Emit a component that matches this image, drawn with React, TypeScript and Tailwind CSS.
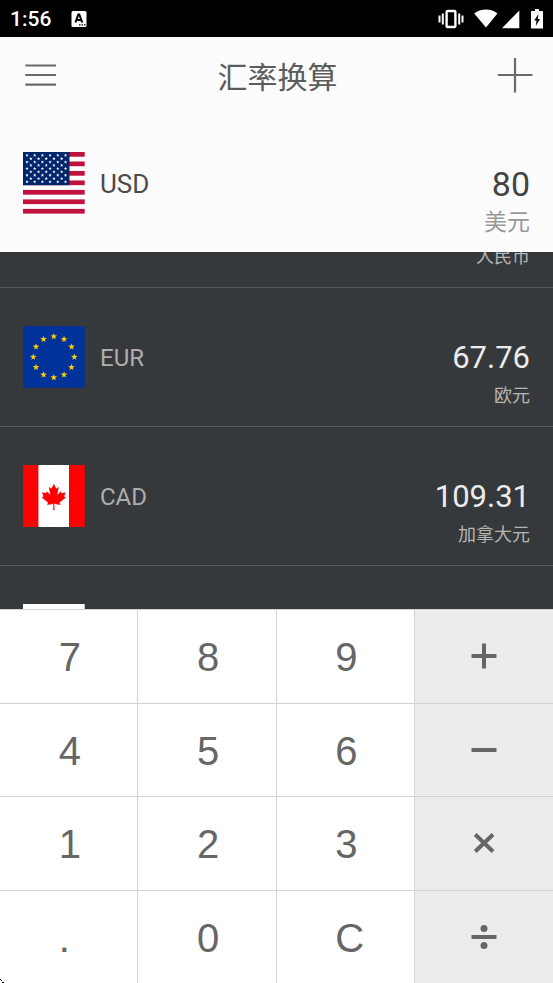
import { useLayoutEffect, useRef, useState } from "react";
import type { ReactNode } from "react";

type Currency = {
  name?: string;
  code?: string;
  value?: string;
  flag?: ReactNode;
};

function starPoints(cx: number, cy: number, r: number) {
  return Array.from({ length: 10 }, (_, i) => {
    const radius = i % 2 === 0 ? r : r * 0.4;
    const angle = (Math.PI / 5) * i - Math.PI / 2;
    return `${cx + radius * Math.cos(angle)},${cy + radius * Math.sin(angle)}`;
  }).join(" ");
}

function UsFlag() {
  const stars = [];
  for (let row = 0; row < 9; row++) {
    const count = row % 2 === 0 ? 6 : 5;
    for (let col = 0; col < count; col++) {
      stars.push([4 + col * 7.7 + (row % 2) * 3.85, 3.4 + row * 3.3]);
    }
  }
  return (
    <svg viewBox="0 0 62 62" className="size-[62px]" aria-hidden="true">
      <rect width="62" height="62" fill="#fff" />
      {[0, 2, 4, 6, 8, 10, 12].map((i) => (
        <rect key={i} y={i * 4.74} width="61.700" height="4.740" fill="#bf133e" />
      ))}
      <rect width="46.500" height="33.200" fill="#00256a" />
      {stars.map(([x, y]) => (
        <polygon key={`${x}-${y}`} points={starPoints(x, y, 1.8)} fill="#fff" />
      ))}
    </svg>
  );
}

function EuFlag() {
  return (
    <svg viewBox="0 0 62 62" className="size-[62px]" aria-hidden="true">
      <rect width="61.700" height="61.700" fill="#039" />
      {Array.from({ length: 12 }, (_, i) => (
        <polygon
          key={i}
          points={starPoints(
            30.8 + 20.5 * Math.sin((i * Math.PI) / 6),
            31 - 20.5 * Math.cos((i * Math.PI) / 6),
            3.5,
          )}
          fill="#fc0"
        />
      ))}
    </svg>
  );
}

function CaFlag() {
  return (
    <svg viewBox="0 0 62 62" className="size-[62px]" aria-hidden="true">
      <rect x="15" width="32" height="62" fill="#fff" />
      <rect width="15.400" height="62" fill="#f00" />
      <rect x="46" width="15.700" height="62" fill="#f00" />
      <path
        transform="translate(30.8 32) scale(.0064)"
        fill="#f00"
        stroke="#f00"
        strokeWidth="50"
        d="m-90 2030 45-863a95 95 0 0 0-111-98l-859 151 116-320a65 65 0 0 0-20-73l-941-762 212-99a65 65 0 0 0 34-79l-186-572 542 115a65 65 0 0 0 73-38l105-247 423 454a65 65 0 0 0 111-57l-204-1052 327 189a65 65 0 0 0 91-27l332-652 332 652a65 65 0 0 0 91 27l327-189-204 1052a65 65 0 0 0 111 57l423-454 105 247a65 65 0 0 0 73 38l542-115-186 572a65 65 0 0 0 34 79l212 99-941 762a65 65 0 0 0-20 73l116 320-859-151a95 95 0 0 0-111 98l45 863z"
      />
    </svg>
  );
}

function BlankFlag() {
  return (
    <svg viewBox="0 0 62 62" className="size-[62px]" aria-hidden="true">
      <rect width="61.700" height="62" fill="#fff" />
    </svg>
  );
}

const currencies: Currency[] = [
  { name: "人民币" },
  { name: "欧元", code: "EUR", value: "67.76", flag: <EuFlag /> },
  { name: "加拿大元", code: "CAD", value: "109.31", flag: <CaFlag /> },
  { flag: <BlankFlag /> },
];

const keys = [
  "7", "8", "9", "+",
  "4", "5", "6", "-",
  "1", "2", "3", "×",
  ".", "0", "C", "÷",
];

function OperatorIcon({ op }: { op: string }) {
  return (
    <svg
      viewBox="0 0 26 26"
      className="size-[26px]"
      fill="none"
      stroke="#666"
      strokeWidth="4"
      aria-hidden="true"
    >
      {op === "+" && <path d="M.5 13h25M13 .5v25" />}
      {op === "-" && <path d="M.5 13h25" />}
      {op === "×" && <path d="m4.200 4.500 17.800 17M22 4.500l-17.800 17" />}
      {op === "÷" && (
        <>
          <path d="M.5 13h25" />
          <circle cx="13" cy="4.500" r="3.500" fill="#666" stroke="none" />
          <circle cx="13" cy="21.500" r="3.500" fill="#666" stroke="none" />
        </>
      )}
    </svg>
  );
}

function StatusBar() {
  return (
    <div className="flex h-[37px] shrink-0 items-center bg-black px-2.5 text-white">
      <span className="text-[21px] leading-6 font-medium">1:56</span>
      <svg viewBox="0 0 16 16" className="ml-5 size-4" aria-hidden="true">
        <rect x=".5" width="15" height="16" rx="1.500" fill="#fff" />
        <path
          d="m4.400 11.500 2.900-8h1l2.900 8M5.500 9h4.800"
          fill="none"
          stroke="#000"
          strokeWidth="2"
        />
        <path
          d="M8 13.800h1.500M10.500 13.800H12M13 13.800h1.500"
          stroke="#000"
          strokeWidth="1.300"
        />
      </svg>
      <div className="ml-auto flex items-center">
        <svg viewBox="0 0 26 20" className="h-5 w-[26px]" aria-hidden="true">
          <rect
            x="8.600"
            y="2"
            width="8.800"
            height="16"
            rx="1"
            fill="none"
            stroke="#fff"
            strokeWidth="2.400"
          />
          <path
            d="M1.500 6.500v7M4.800 4.500v11M21.200 4.500v11M24.500 6.500v7"
            stroke="#fff"
            strokeWidth="2"
          />
        </svg>
        <svg viewBox="0 0 24 20" className="ml-2.5 h-5 w-6" aria-hidden="true">
          <path
            d="M12 18.500 .2 4.600C3.500 1.800 7.500.6 12 .6s8.500 1.200 11.400 4z"
            fill="#fff"
          />
        </svg>
        <svg viewBox="0 0 18 20" className="ml-1 h-5 w-[18px]" aria-hidden="true">
          <path d="M0 19.200 17.300 1.500v17.700z" fill="#fff" />
        </svg>
        <svg viewBox="0 0 12 20" className="ml-[11px] h-5 w-3" aria-hidden="true">
          <path
            d="M4 0h4v2h3.500q.5 0 .5.500v16.500q0 .5-.5.500H.5q-.5 0-.5-.5v-16.500q0-.5.500-.5H4z"
            fill="#fff"
          />
          <path d="M7.500 5 3.200 11.500h2.300L4.800 17l4.200-7H6.800z" fill="#000" />
        </svg>
      </div>
    </div>
  );
}

function CurrencyRow({ currency }: { currency: Currency }) {
  return (
    <li className="flex h-[139px] items-start border-b border-[#54585a] px-[23px] pt-[38px]">
      {currency.flag}
      <span className="ml-[15px] text-2xl leading-[64px] text-[#adadad]">
        {currency.code}
      </span>
      <div className="ml-auto pt-3 text-right">
        <div className="min-h-10 text-[31px] leading-10 text-[#ececec]">
          {currency.value}
        </div>
        <div className="text-lg leading-9 text-[#b5b5b5]">{currency.name}</div>
      </div>
    </li>
  );
}

export default function App() {
  const listRef = useRef<HTMLUListElement>(null);
  const [amount, setAmount] = useState("80");

  // the list opens on EUR, with the end of the first row still showing
  useLayoutEffect(() => {
    if (listRef.current) listRef.current.scrollTop = 103;
  }, []);

  const pressKey = (key: string) => {
    if (key === "C") {
      setAmount("0");
    } else if (/[0-9.]/.test(key)) {
      setAmount((current) => (current === "0" ? key : current + key));
    }
  };

  return (
    <div className="relative flex h-screen flex-col overflow-hidden bg-[#fcfcfc] font-[Roboto,'Noto_Sans_CJK_SC',sans-serif]">
      <StatusBar />

      <header className="flex h-[78px] shrink-0 items-center justify-between pr-5 pl-6">
        <button type="button" aria-label="菜单">
          <svg viewBox="0 0 34 34" className="size-[34px]" aria-hidden="true">
            <path
              d="M1.300 6.500H32M1.300 16H32M1.300 25.700H32"
              stroke="#6a6a6a"
              strokeWidth="2.200"
            />
          </svg>
        </button>
        <h1 className="pt-1 text-[30px] leading-10 text-[#5c5c5c]">
          汇率换算
        </h1>
        <button type="button" aria-label="添加">
          <svg viewBox="0 0 36 36" className="size-9" aria-hidden="true">
            <path
              d="M.8 17h34.700M18 -.5v35"
              stroke="#6a6a6a"
              strokeWidth="2.200"
            />
          </svg>
        </button>
      </header>

      <section className="flex h-[137px] shrink-0 items-start px-[23px] pt-[37px]">
        <UsFlag />
        <span className="ml-[15px] text-[26px] leading-[64px] text-[#4a4a4a]">
          USD
        </span>
        <div className="ml-auto pt-3 text-right">
          <div className="text-[34px] leading-10 text-[#444]">{amount}</div>
          <div className="text-[23px] leading-[38px] text-[#999]">美元</div>
        </div>
      </section>

      <ul
        ref={listRef}
        className="min-h-0 flex-1 overflow-y-auto bg-[#36393c] [scrollbar-width:none]"
      >
        {currencies.map((currency, index) => (
          <CurrencyRow key={index} currency={currency} />
        ))}
      </ul>

      <div className="grid h-[374px] shrink-0 grid-cols-4 grid-rows-4 bg-white font-['Liberation_Sans',sans-serif]">
        {keys.map((key, index) => {
          const isOperator = index % 4 === 3;
          return (
            <button
              key={key}
              type="button"
              aria-label={key}
              onClick={() => pressKey(key)}
              className={
                isOperator
                  ? "flex items-center justify-center border-t border-[#d2d2d2] bg-[#ececec]"
                  : "flex items-center justify-center border-t border-r border-[#d2d2d2] pt-0.5 pl-0.5 text-[40px] leading-none text-[#666]"
              }
            >
              {isOperator ? (
                <OperatorIcon op={key} />
              ) : (
                <span className="w-[22px] text-left">{key}</span>
              )}
            </button>
          );
        })}
      </div>

      <svg
        viewBox="0 0 4 4"
        className="absolute bottom-0 left-0 size-1"
        aria-hidden="true"
      >
        <path d="M0 0h1v1H0zM1 1h1v1H1zM2 3h2v1H2z" fill="#000" />
      </svg>
    </div>
  );
}
